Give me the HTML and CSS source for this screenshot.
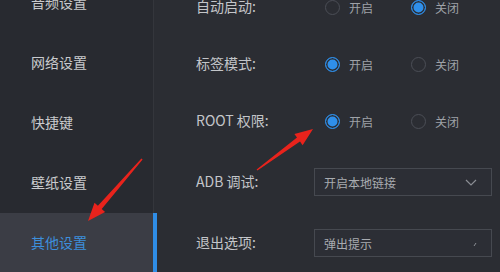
FILE: index.html
```html
<!DOCTYPE html>
<html lang="zh">
<head>
<meta charset="utf-8">
<link rel="stylesheet" href="styles.css">
</head>
<body>
<aside class="sidebar">
  <ul class="menu">
    <li class="menu-item">音频设置</li>
    <li class="menu-item">网络设置</li>
    <li class="menu-item">快捷键</li>
    <li class="menu-item">壁纸设置</li>
    <li class="menu-item active">其他设置</li>
  </ul>
</aside>
<main class="content">
  <div class="row">
    <span class="label">自动启动:</span>
    <div class="radios">
      <span class="option"><i class="radio"></i>开启</span>
      <span class="option"><i class="radio checked"></i>关闭</span>
    </div>
  </div>
  <div class="row">
    <span class="label">标签模式:</span>
    <div class="radios">
      <span class="option"><i class="radio checked"></i>开启</span>
      <span class="option"><i class="radio"></i>关闭</span>
    </div>
  </div>
  <div class="row">
    <span class="label">ROOT 权限:</span>
    <div class="radios">
      <span class="option"><i class="radio checked"></i>开启</span>
      <span class="option"><i class="radio"></i>关闭</span>
    </div>
  </div>
  <div class="row select-row">
    <span class="label">ADB 调试:</span>
    <div class="select">
      <span>开启本地链接</span>
      <svg class="chev" width="12" height="7" viewBox="0 0 12 7"><path d="M1 1 L6 6 L11 1" fill="none" stroke="#8b8e94" stroke-width="1.2"/></svg>
    </div>
  </div>
  <div class="row select-row">
    <span class="label">退出选项:</span>
    <div class="select">
      <span>弹出提示</span>
      <svg class="chev" width="12" height="7" viewBox="0 0 12 7"><path d="M9 6 L11 3" fill="none" stroke="#8b8e94" stroke-width="1"/></svg>
    </div>
  </div>
</main>
<svg class="arrows" width="500" height="272" viewBox="0 0 500 272">
  <polygon fill="#e8231c" points="142.6,159.5 101.7,209.0 105.1,212.0 88,221 94.5,202.8 97.9,205.8 141.4,158.5"/>
  <polygon fill="#e8231c" points="257.4,170.6 300.0,141.6 302.6,145.3 313,129 294.4,134.0 297.0,137.6 256.6,169.4"/>
</svg>
</body>
</html>
```
FILE: styles.css
```css
* { box-sizing: border-box; }
html, body {
  margin: 0;
  padding: 0;
}
body {
  width: 500px;
  height: 272px;
  overflow: hidden;
  display: flex;
  position: relative;
  background: #2b2d33;
  font-family: "Noto Sans CJK SC", "Noto Sans", sans-serif;
}
.sidebar {
  width: 154px;
  flex: none;
  background: #282a30;
  border-right: 1px solid #34363c;
  position: relative;
  z-index: 1;
}
.menu {
  list-style: none;
  margin: -27px 0 0 0;
  padding: 0;
}
.menu-item {
  height: 60px;
  display: flex;
  align-items: center;
  padding-left: 31px;
  padding-bottom: 2px;
  font-size: 14px;
  color: #c9cacd;
}
.menu-item.active {
  background: #3b3d45;
  color: #3d8fdb;
  position: relative;
}
.menu-item.active::after {
  content: "";
  position: absolute;
  top: 0;
  bottom: 0;
  right: -4px;
  width: 4px;
  background: #2f8de6;
}
.content {
  flex: 1;
  background: #2b2d33;
  padding-left: 42px;
  margin-top: -7px;
  display: flex;
  flex-direction: column;
  gap: 29px;
}
.row {
  height: 28px;
  display: flex;
  align-items: center;
  flex: none;
}
.select-row {
  margin-top: 4px;
}
.label {
  width: 118px;
  font-size: 14px;
  color: #c3c5c9;
  padding-bottom: 2px;
}
.radios {
  display: flex;
  margin-left: 11px;
}
.option {
  width: 86px;
  display: flex;
  align-items: center;
  gap: 9px;
  font-size: 12px;
  color: #9fa2a8;
}
.radio {
  width: 15px;
  height: 15px;
  border-radius: 50%;
  border: 1px solid #4b4e56;
  display: block;
}
.radio.checked {
  border: 1.5px solid #2f8fea;
  background: #2f8fea;
  box-shadow: inset 0 0 0 1.5px #2b2d33;
}
.select {
  width: 178px;
  height: 28px;
  border: 1px solid #464950;
  background: #2c2e35;
  padding: 0 14px 0 9px;
  display: flex;
  align-items: center;
  justify-content: space-between;
  font-size: 12px;
  color: #a8abb0;
}
.arrows {
  position: absolute;
  left: 0;
  top: 0;
  z-index: 2;
  pointer-events: none;
}
```
